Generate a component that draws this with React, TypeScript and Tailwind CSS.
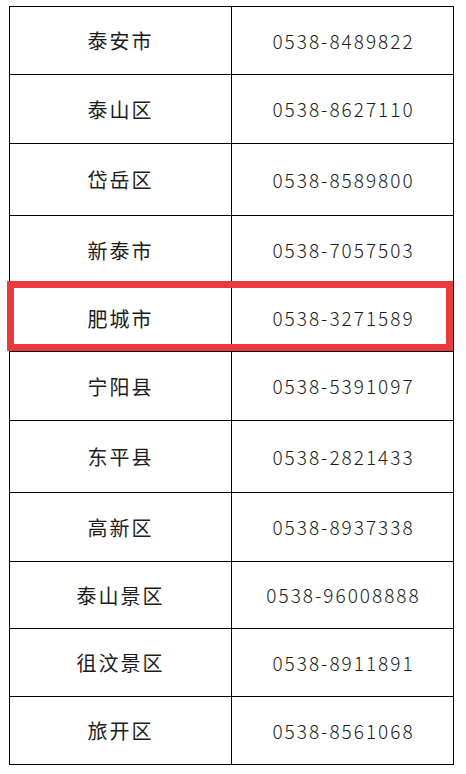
const ROWS: { name: string; phone: string; h: number }[] = [
  { name: "泰安市", phone: "0538-8489822", h: 68 },
  { name: "泰山区", phone: "0538-8627110", h: 69 },
  { name: "岱岳区", phone: "0538-8589800", h: 72 },
  { name: "新泰市", phone: "0538-7057503", h: 69 },
  { name: "肥城市", phone: "0538-3271589", h: 67 },
  { name: "宁阳县", phone: "0538-5391097", h: 69 },
  { name: "东平县", phone: "0538-2821433", h: 72 },
  { name: "高新区", phone: "0538-8937338", h: 69 },
  { name: "泰山景区", phone: "0538-96008888", h: 67 },
  { name: "徂汶景区", phone: "0538-8911891", h: 68 },
  { name: "旅开区", phone: "0538-8561068", h: 68 },
];

export default function App() {
  return (
    <div
      className="relative w-[466px] h-[774px] bg-white pt-[6px] pl-[9px] text-[#1c1c1c]"
      style={{ fontFamily: '"Noto Sans CJK SC", "Noto Sans", sans-serif' }}
    >
      <div className="w-[445px] border-x border-b border-black">
        {ROWS.map((r) => (
          <div
            key={r.name}
            className="grid grid-cols-[222px_1fr] border-t border-black"
            style={{ height: r.h }}
          >
            <div className="flex items-center justify-center border-r border-black text-[20px] tracking-[2px] pt-[1px]">
              {r.name}
            </div>
            <div className="flex items-center justify-center text-[19px] font-light tracking-[2px] pt-[1px] pl-[2px]">
              {r.phone}
            </div>
          </div>
        ))}
      </div>

      {/* highlight */}
      <div className="absolute left-[7px] top-[281px] w-[446px] h-[70px] border-[7px] border-[#ea3a3d]" />
    </div>
  );
}
